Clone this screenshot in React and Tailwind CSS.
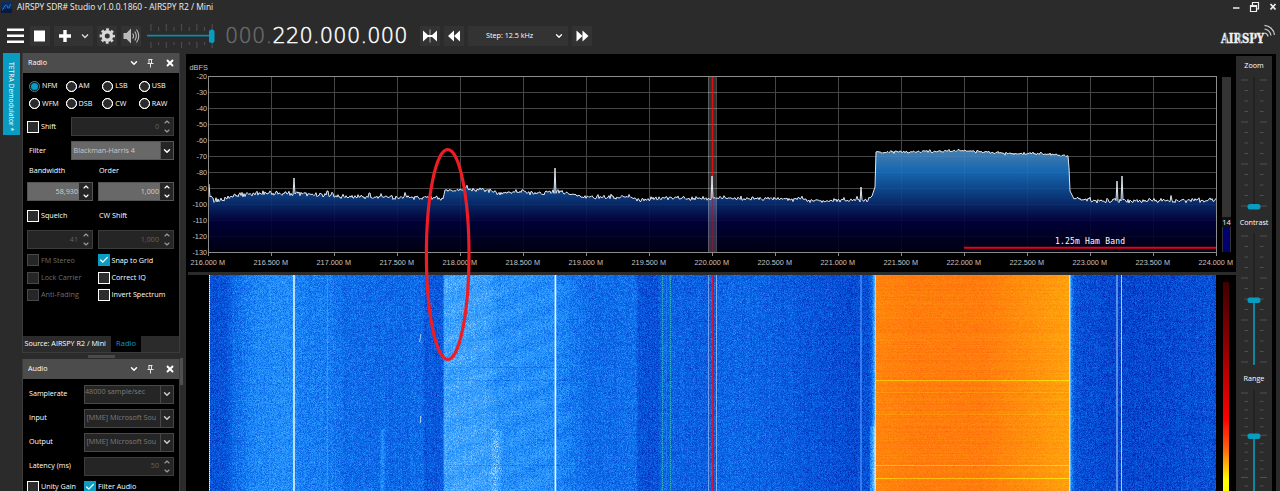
import React, { useLayoutEffect, useRef } from 'react';
import { ChevronDown, ChevronUp, Check, X } from 'lucide-react';

const GRID_LEFT = 208.5;
const GRID_STEP = 63;
const DB_TOP = 76.5;
const DB_STEP = 16;

const dbLabels = [-20, -30, -40, -50, -60, -70, -80, -90, -100, -110, -120, -130];
const freqLabels = Array.from({ length: 17 }, (_, i) => `${(216 + i * 0.5).toFixed(3)} M`);

// noise floor of the spectrum, [x, y]
const floorPoints = [
  [209, 184], [210, 197], [214, 200], [225, 199], [234, 196], [255, 193], [275, 193], [300, 193.5],
  [325, 195.5], [350, 197], [400, 197], [443, 198], [445, 190.5], [465, 190], [484, 189.5], [500, 193],
  [520, 191.5], [540, 193], [560, 191.5], [580, 196], [600, 198], [630, 196.5], [640, 200], [660, 198],
  [700, 198.5], [740, 198], [790, 199], [820, 201], [850, 200], [868, 200], [872, 196], [875, 187],
  [875.6, 152], [920, 151.5], [960, 151], [985, 151.5], [1005, 153.5], [1040, 153.5], [1060, 155],
  [1068.5, 156], [1070, 191], [1074, 199], [1100, 201], [1140, 201], [1180, 200.5], [1216, 200],
];

const spikes = [
  [293.7, 178], [327.5, 191], [369.5, 193], [555.3, 168], [712.3, 176],
  [861.2, 187], [1117, 181], [1121.6, 176], [1170.6, 195.5],
];

// waterfall signal level by column
const levelPoints = [
  [209, 0.3], [225, 0.3], [235, 0.4], [255, 0.48], [292, 0.5], [300, 0.46], [330, 0.44], [345, 0.4],
  [400, 0.38], [421, 0.4], [425, 0.33], [443.4, 0.33], [443.6, 0.59], [485, 0.58], [500, 0.52], [550, 0.51],
  [570, 0.45], [590, 0.39], [636, 0.41], [639, 0.31], [658, 0.3], [662, 0.37], [700, 0.35], [735, 0.38],
  [755, 0.37], [800, 0.33], [850, 0.28], [868, 0.29], [872, 0.4], [875.4, 0.72], [1069, 0.72],
  [1072, 0.42], [1076, 0.3], [1120, 0.26], [1170, 0.27], [1216, 0.3],
];

const palette = [
  [0, 0, 0, 120], [0.12, 0, 30, 168], [0.28, 6, 76, 212], [0.4, 14, 108, 234], [0.5, 30, 142, 252],
  [0.62, 72, 168, 255], [0.8, 170, 220, 255], [1, 240, 250, 255],
];

function makeRandom(seed) {
  let s = seed;
  return () => {
    s = (s * 1664525 + 1013904223) >>> 0;
    return s / 4294967296;
  };
}

function interpolate(points, x) {
  if (x <= points[0][0]) return points[0].slice(1);
  for (let i = 1; i < points.length; i++) {
    if (x <= points[i][0]) {
      const a = points[i - 1];
      const b = points[i];
      const t = (x - a[0]) / (b[0] - a[0]);
      return a.slice(1).map((v, k) => v + (b[k + 1] - v) * t);
    }
  }
  return points[points.length - 1].slice(1);
}

function buildTrace() {
  const rand = makeRandom(42);
  const pts = [];
  for (let x = 209; x <= 1216; x += 1) {
    const spike = spikes.find((s) => Math.abs(s[0] - x) <= 0.5);
    const steep = (x > 869 && x < 877) || (x > 1066 && x < 1075) || x < 211;
    const plateau = x >= 877 && x <= 1066;
    let y = interpolate(floorPoints, x)[0];
    if (!steep) y += (rand() + rand() - 1) * (plateau ? 1.8 : 2.8);
    if (!steep && !plateau && rand() > 0.98) y -= 3;
    if (spike) y = spike[1];
    pts.push(`${x},${y.toFixed(1)}`);
  }
  return pts.join(' ');
}

const trace = buildTrace();

function Waterfall() {
  const ref = useRef(null);

  useLayoutEffect(() => {
    const ctx = ref.current.getContext('2d');
    const w = 1007;
    const h = 216;
    const img = ctx.createImageData(w, h);
    const rand = makeRandom(7);
    const colJitter = Array.from({ length: w }, () => (rand() - 0.5) * 0.03);
    const levels = Array.from({ length: w }, (_, i) => interpolate(levelPoints, i + 209.5)[0]);

    for (let y = 0; y < h; y++) {
      const gy = y + 275;
      const row = (rand() - 0.5) * 0.015;
      const rowOrange = (rand() - 0.5) * 12;
      const dim = gy === 367 || gy === 380 || gy === 465 ? 0.07 : 0;
      for (let x = 0; x < w; x++) {
        const gx = x + 209;
        const n = (rand() + rand() + rand()) / 1.5 - 1;
        let r, g, b;
        if (gx >= 876 && gx < 1069) {
          const t = (gx - 876) / 193;
          let base = 124 + 14 * Math.max(0, 0.2 - t) * 3;
          if (t > 0.55) base += (t - 0.55) * 80;
          r = 255;
          g = base + n * 20 + rowOrange;
          b = 13;
          if (gy === 380 || gy === 465 || gy === 478) g += 62;
          if (gy === 392 || gy === 414) g += 22;
        } else {
          let v = levels[x] + colJitter[x] + row + n * 0.165;
          if (gx > 443 && gx < 575) {
            v += Math.sin((gy * 2.2 + gx * 0.9) / 9) * 0.018 - dim;
          }
          if (gy > 428) {
            const d = Math.abs(gx - 497 + (gy - 428) * 0.04);
            if (d < 7) v += (1 - d / 7) * (0.13 + n * 0.1);
            const e = Math.abs(gx - 382);
            if (e < 4) v += (1 - e / 4) * 0.11;
          }
          if (gx > 869 && gx < 876 && gy > 425) v += 0.14;
          const c = interpolate(palette, Math.max(0, v));
          r = c[0];
          g = c[1];
          b = c[2];
        }
        const i = (y * w + x) * 4;
        img.data[i] = r;
        img.data[i + 1] = g;
        img.data[i + 2] = b;
        img.data[i + 3] = 255;
      }
    }
    ctx.putImageData(img, 0, 0);

    const line = (x, width, color) => {
      ctx.fillStyle = color;
      ctx.fillRect(x - 209, 0, width, h);
    };
    const dots = (x, color) => {
      ctx.fillStyle = color;
      for (let y = 0; y < h; y += 2) ctx.fillRect(x - 209, y, 1, 1);
    };

    line(209, 1, 'rgba(150,215,240,0.7)');
    dots(209, '#ffffff');
    line(293, 2, 'rgba(215,238,255,0.85)');
    line(327, 1, 'rgba(110,190,255,0.3)');
    line(555, 1, '#fffb90');
    line(554, 1, 'rgba(170,215,255,0.6)');
    line(556, 1, 'rgba(170,215,255,0.3)');
    line(666, 1, 'rgba(50,150,255,0.4)');
    line(662, 1, 'rgba(20,140,150,0.8)');
    line(670, 1, 'rgba(20,140,150,0.8)');
    dots(662, '#28c860');
    dots(670, '#28c860');
    line(708, 1, 'rgba(180,200,240,0.6)');
    line(716, 1, 'rgba(200,215,245,0.65)');
    line(712, 1, '#d01838');
    line(713, 1, 'rgba(110,30,100,0.5)');
    line(860, 2, 'rgba(90,165,255,0.55)');
    line(875, 1, 'rgba(160,235,255,0.6)');
    line(1069, 1, 'rgba(190,240,230,0.9)');
    line(1070, 1, 'rgba(120,200,255,0.6)');
    line(1116, 2, 'rgba(130,180,245,0.65)');
    line(1121, 1, 'rgba(205,225,255,0.85)');
    ctx.strokeStyle = 'rgba(190,225,255,0.8)';
    ctx.beginPath();
    ctx.moveTo(212, 59);
    ctx.lineTo(210.5, 67);
    ctx.moveTo(211.5, 141);
    ctx.lineTo(211.5, 148);
    ctx.stroke();
  }, []);

  return <canvas ref={ref} width={1007} height={216} className="block h-[216px] w-[1007px]" />;
}

function Spectrum() {
  return (
    <svg width="1050" height="218" viewBox="186 54 1050 218" className="block" fontFamily="Liberation Sans, Arial, sans-serif">
      <defs>
        <linearGradient id="spec" gradientUnits="userSpaceOnUse" x1="0" y1="76" x2="0" y2="252">
          <stop offset="0" stopColor="#87ceeb" />
          <stop offset="0.43" stopColor="#4a8ac0" />
          <stop offset="0.54" stopColor="#1972c4" />
          <stop offset="0.68" stopColor="#0c4088" />
          <stop offset="0.83" stopColor="#01003c" />
          <stop offset="1" stopColor="#000014" />
        </linearGradient>
      </defs>
      <g stroke="#454545" shapeRendering="crispEdges">
        {dbLabels.map((d, i) => (
          <path key={d} d={`M208 ${DB_TOP + i * DB_STEP}H1216`} />
        ))}
        {freqLabels.map((f, i) => (
          <path key={f} d={`M${GRID_LEFT + i * GRID_STEP} 76V252`} />
        ))}
      </g>
      <polygon points={`209,252 ${trace} 1216,252`} fill="url(#spec)" fillOpacity="0.9" />
      <rect x="708" y="77" width="8.5" height="175" fill="#fff" fillOpacity="0.2" />
      <path d="M708.5 77V252M716.5 77V252" stroke="#fff" strokeOpacity="0.2" />
      <path d="M712.5 77V176" stroke="#e01010" strokeWidth="1.3" />
      <path d="M712.5 176V252" stroke="#c00020" strokeOpacity="0.45" />
      <polyline points={trace} fill="none" stroke="#dfe6ee" strokeWidth="1" />
      <g stroke="#8c8c8c" fill="none" shapeRendering="crispEdges">
        <path d="M208.5 76.5H1216.5V252.5H208.5Z" />
        {freqLabels.map((f, i) => (
          <path key={f} d={`M${GRID_LEFT + i * GRID_STEP} 252V256`} />
        ))}
      </g>
      <path d="M964 247.7H1216" stroke="#e8001c" strokeWidth="2" />
      <text x="1055" y="244" fontSize="8" textLength="70" fill="#fff" fontFamily="DejaVu Sans Mono, monospace">1.25m Ham Band</text>
      <g fill="#c4c4c4" fontSize="7.3">
        <text x="189.5" y="70">dBFS</text>
        {dbLabels.map((d, i) => (
          <text key={d} x="207" y={79.2 + i * DB_STEP} textAnchor="end">{d}</text>
        ))}
        {freqLabels.map((f, i) => (
          <text key={f} x={207.8 + i * GRID_STEP} y="265" textAnchor="middle">{f}</text>
        ))}
      </g>
      <rect x="1222" y="77" width="9" height="175" fill="#333" />
      <rect x="1222" y="217" width="9" height="10" fill="#111" />
      <rect x="1223" y="227" width="7" height="25" fill="#00006e" />
      <text x="1226.5" y="225" textAnchor="middle" fontSize="7.5" fill="#eee" fontFamily="Open Sans, sans-serif">14</text>
    </svg>
  );
}

function PanelHeader({ title }) {
  return (
    <div className="flex h-5 shrink-0 items-center bg-[#4c4c4c] pl-[5px] pr-[4px]">
      <span className="flex-1">{title}</span>
      <ChevronDown className="mr-[8px] size-[10px]" strokeWidth={3.5} />
      <svg className="mr-[11px]" width="7" height="9" viewBox="0 0 7 9" fill="none" stroke="#e8e8e8">
        <path d="M1.5 0.5H5.5M2 0.5V4.5M4.5 0.5V4.5M0.5 4.5H6.5M3.5 4.5V8.5" />
      </svg>
      <X className="size-[10px]" strokeWidth={4.5} />
    </div>
  );
}

function RadioButton({ label, selected }) {
  return (
    <div className="flex w-[36.6px] items-center gap-[2px]">
      <span
        className={
          selected
            ? 'flex size-[11px] shrink-0 items-center justify-center rounded-full border-[1.5px] border-[#0a9cc4] bg-[#111]'
            : 'size-[11px] shrink-0 rounded-full outline-[0.5px] -outline-offset-1 outline-white border border-white bg-[#2b2b2b]'
        }
      >
        {selected && <span className="size-[7px] rounded-full bg-[#0a9cc4]" />}
      </span>
      {label}
    </div>
  );
}

function CheckBox({ label, checked, disabled }) {
  let box = 'border-[1.5px] border-white bg-[#2d2d2d]';
  if (checked) box = 'bg-[#0a9cc4]';
  if (disabled) box = 'border border-[#484848] bg-[#262626]';
  return (
    <div className={`flex items-center gap-[2px] ${disabled ? 'text-[#6e6e6e]' : ''}`}>
      <span className={`flex size-[12px] items-center justify-center ${box}`}>
        {checked && <Check className="size-[10px]" strokeWidth={3} />}
      </span>
      {label}
    </div>
  );
}

function NumberBox({ value, enabled, className }) {
  return (
    <div
      className={`flex h-[19px] border ${enabled ? 'border-[#555] bg-[#686868] text-[#d0d0d0]' : 'border-[#3c3c3c] bg-[#252525] text-[#626262]'} ${className}`}
    >
      <span className="flex flex-1 items-center justify-end pr-px">{value}</span>
      <span className={`flex w-[13px] flex-col items-center justify-between bg-[#252525] ${enabled ? 'text-white' : 'text-[#999]'}`}>
        <ChevronUp className="size-[8px]" strokeWidth={3.5} />
        <ChevronDown className="size-[8px]" strokeWidth={3.5} />
      </span>
    </div>
  );
}

function SelectBox({ value, enabled, className }) {
  return (
    <div className={`flex h-[19px] border ${enabled ? 'border-[#555] bg-[#686868] text-[#c8c8c8]' : 'border-[#484848] bg-[#252525] text-[#7a7a7a]'} ${className}`}>
      <span className="flex flex-1 items-center overflow-hidden whitespace-nowrap pl-[1.5px]">{value}</span>
      <span className={`flex w-[13px] items-center justify-center border-l bg-[#252525] ${enabled ? 'border-[#555] text-white' : 'border-[#484848] text-[#ccc]'}`}>
        <ChevronDown className="size-[10px]" strokeWidth={3.5} />
      </span>
    </div>
  );
}

function RadioPanel() {
  return (
    <section className="flex h-[300px] shrink-0 flex-col border-x border-b border-[#3c3c3c] bg-black">
      <PanelHeader title="Radio" />
      <div className="flex flex-1 flex-col pl-[4px] pt-[4px]">
        <div className="ml-[2px] flex h-[18px]">
          <RadioButton label="NFM" selected />
          <RadioButton label="AM" />
          <RadioButton label="LSB" />
          <RadioButton label="USB" />
        </div>
        <div className="ml-[2px] flex h-[17px]">
          <RadioButton label="WFM" />
          <RadioButton label="DSB" />
          <RadioButton label="CW" />
          <RadioButton label="RAW" />
        </div>
        <div className="mt-[5px] flex h-[19px] items-center">
          <div className="w-[44px]"><CheckBox label="Shift" /></div>
          <NumberBox value="0" className="w-[103px]" />
        </div>
        <div className="mt-[5px] flex h-[19px] items-center">
          <div className="w-[44px] pl-[2px]">Filter</div>
          <SelectBox value="Blackman-Harris 4" enabled className="w-[103px]" />
        </div>
        <div className="flex h-[22px] items-center">
          <div className="w-[71px] pl-[2px]">Bandwidth</div>
          <div className="pl-px">Order</div>
        </div>
        <div className="flex gap-[5px]">
          <NumberBox value="58,930" enabled className="w-[66px]" />
          <NumberBox value="1,000" enabled className="w-[76px]" />
        </div>
        <div className="flex h-[29px] items-center">
          <div className="w-[71px]"><CheckBox label="Squelch" /></div>
          <div className="pl-px">CW Shift</div>
        </div>
        <div className="flex gap-[5px]">
          <NumberBox value="41" className="w-[66px]" />
          <NumberBox value="1,000" className="w-[76px]" />
        </div>
        <div className="mt-[2.5px] grid auto-rows-[17.4px] grid-cols-[70.5px_1fr]">
          <CheckBox label="FM Stereo" disabled />
          <CheckBox label="Snap to Grid" checked />
          <CheckBox label="Lock Carrier" disabled />
          <CheckBox label="Correct IQ" />
          <CheckBox label="Anti-Fading" disabled />
          <CheckBox label="Invert Spectrum" />
        </div>
      </div>
      <div className="flex h-[16px] items-center bg-[#2b2b2b]">
        <span className="flex h-full w-[88px] items-center pl-[1.5px]">Source: AIRSPY R2 / Mini</span>
        <span className="flex h-full w-[30px] items-center justify-center bg-black text-[7.6px] text-[#0a9cc4]">Radio</span>
      </div>
    </section>
  );
}

function AudioRow({ label, children }) {
  return (
    <div className="flex h-6 items-center">
      <span className="w-[57px] pl-[2px]">{label}</span>
      {children}
    </div>
  );
}

function AudioPanel() {
  return (
    <section className="flex h-[132px] shrink-0 flex-col overflow-hidden border-x border-[#3c3c3c] bg-black">
      <PanelHeader title="Audio" />
      <div className="pl-[4px] pt-[3px]">
        <AudioRow label="Samplerate">
          <SelectBox value={<span className="-ml-[1.5px] -mt-[4px]">48000 sample/sec</span>} className="w-[90px]" />
        </AudioRow>
        <AudioRow label="Input"><SelectBox value="[MME] Microsoft Sou" className="w-[90px]" /></AudioRow>
        <AudioRow label="Output"><SelectBox value="[MME] Microsoft Sou" className="w-[90px]" /></AudioRow>
        <AudioRow label="Latency (ms)"><NumberBox value="50" className="w-[90px]" /></AudioRow>
        <div className="flex h-[18px] items-center">
          <div className="w-[57px]"><CheckBox label="Unity Gain" /></div>
          <CheckBox label="Filter Audio" checked />
        </div>
      </div>
    </section>
  );
}

function VerticalSlider({ height, count, step, every, thumb, fill }) {
  const ticks = Array.from({ length: count }, (_, i) => i);
  return (
    <svg width="36" height={height} className="block shrink-0">
      <rect x="17" y="2" width="2" height={height - 4} fill="#222" />
      {ticks.map((i) => {
        const y = 5 + i * step;
        const len = i % every === 0 ? 7 : 3.5;
        return <path key={i} d={`M${12 - len} ${y}H12M24 ${y}h${len}`} stroke="#505050" />;
      })}
      {fill && <rect x="17" y={thumb} width="2" height={height - thumb - 3} fill="#0c87a0" />}
      <rect x="11.5" y={thumb - 2.5} width="13" height="5.5" rx="2.5" fill="#0a9cc0" />
    </svg>
  );
}

function SideSliders() {
  return (
    <aside className="mt-[2px] flex w-9 flex-col overflow-hidden bg-[#2b2b2b] text-center">
      <div className="h-[19px] shrink-0 leading-[18px]">Zoom</div>
      <VerticalSlider height={137} count={13} step={10.5} every={4} thumb={131.5} />
      <div className="h-[19px] shrink-0 leading-[20px]">Contrast</div>
      <VerticalSlider height={137} count={13} step={10.5} every={4} thumb={69} fill />
      <div className="h-[20px] shrink-0 leading-[21px]">Range</div>
      <VerticalSlider height={110} count={13} step={8.45} every={5} thumb={48} fill />
    </aside>
  );
}

function TitleBar() {
  return (
    <header className="flex h-[14px] shrink-0 items-center">
      <svg width="11" height="11" viewBox="0 0 11 11" className="ml-px">
        <rect width="11" height="11" fill="#0a2c66" />
        <rect y="7" width="11" height="4" fill="#071a3c" />
        <path d="M1 8C3 8 3 3 5 3S6 7 7.5 6 9 2 10 2" stroke="#2680d0" fill="none" />
      </svg>
      <span className="ml-[5px] flex-1 text-[8.45px] leading-none text-[#f0f0f0]">AIRSPY SDR# Studio v1.0.0.1860 - AIRSPY R2 / Mini</span>
      <svg width="48" height="12" viewBox="1232 0 48 12" fill="none" stroke="#eee">
        <path d="M1233 7H1239.5" strokeWidth="1.5" />
        <path d="M1252.5 4V1.500H1258.500V8H1256.500M1250.500 4.500H1256.500V10.500H1250.500ZM1250.500 5.500H1256.500" strokeWidth="1.2" />
        <path d="M1270.5 3L1275.5 8.5M1275.5 3L1270.5 8.5" strokeWidth="1.7" />
      </svg>
    </header>
  );
}

function Toolbar() {
  return (
    <div className="flex h-[39px] shrink-0 items-center pt-[5px]">
      <svg width="142" height="20" viewBox="0 0 142 20">
        <path d="M30 0h20v20H30zM54 0h39v20H54zM97 0h20v20H97zM121 0h20v20h-20z" fill="#333" />
        <path d="M7 3.7h17M7 9.7h17M7 15.7h17" stroke="#fff" strokeWidth="2.6" />
        <path d="M34 4.5h11v11H34z" fill="#fff" />
        <path d="M65 4v12M59 10h12" stroke="#fff" strokeWidth="3.4" />
        <path d="M82 8.5l3 3 3-3" stroke="#ddd" strokeWidth="1.3" fill="none" />
        <circle cx="107.3" cy="10" r="4.2" fill="none" stroke="#d8d8d8" strokeWidth="3.4" />
        <circle cx="107.3" cy="10" r="6.6" fill="none" stroke="#d8d8d8" strokeWidth="2.2" strokeDasharray="2.8 2.384" strokeDashoffset="1.4" />
        <path d="M123.5 7h3l4.5-4.5v15L126.5 13h-3z" fill="#bbb" />
        <path d="M132.7 7.5q1.8 2.5 0 5M134.8 5.5q3 4.5 0 9M136.5 3.5q4.5 6.5 0 13" stroke="#bbb" fill="none" strokeWidth="1.1" />
      </svg>
      <svg width="74" height="26" viewBox="142 0 74 26">
        {Array.from({ length: 9 }, (_, i) => (
          <path
            key={i}
            d={i % 2 ? `M${151 + i * 7.65} 4v4M${151 + i * 7.65} 19v3` : `M${151 + i * 7.65} 1v7M${151 + i * 7.65} 19v6`}
            stroke="#505050"
          />
        ))}
        <path d="M147 12.7H212" stroke="#0c8ba8" strokeWidth="1.7" />
        <rect x="209" y="6.5" width="5.5" height="13.5" rx="2.5" fill="#0a9cc0" />
      </svg>
      <div className="ml-[9px] w-[186px] whitespace-nowrap font-['DejaVu_Sans'] text-[20.8px] font-extralight leading-none tracking-[0.28px] text-white [-webkit-text-stroke:0.5px]">
        <span className="text-[#6a6a6a]">000.</span>220.000.000
      </div>
      <svg width="20" height="20" className="ml-[9px] bg-[#333]">
        <path d="M3 4.500L9 10 3 15.500zM17 4.500L11 10l6 5.500z" fill="#fff" />
        <path d="M10 3.5v13" stroke="#aaa" strokeWidth="1" />
        <path d="M3 9h14v2H3z" fill="#fff" />
      </svg>
      <svg width="20" height="20" className="ml-1 bg-[#333]">
        <path d="M10 4.500L4 10l6 5.500zM16 4.500L10 10l6 5.500z" fill="#fff" />
      </svg>
      <div className="ml-1 flex h-5 w-[100px] items-center bg-[#333]">
        <span className="ml-[18px] flex-1">Step: 12.5 kHz</span>
        <ChevronDown className="mr-[4px] size-[10px]" strokeWidth={3} />
      </div>
      <svg width="20" height="20" className="ml-1 bg-[#333]">
        <path d="M4.500 4.500l6 5.500-6 5.500zM10.500 4.500l6 5.500-6 5.500z" fill="#fff" />
      </svg>
      <svg width="58" height="24" viewBox="1218 22.500 58 24" className="ml-auto mr-[4px]">
        <text x="1221" y="41.5" fontFamily="DejaVu Serif, serif" fontWeight="700" fontSize="13" textLength="43" lengthAdjust="spacingAndGlyphs" fill="#f0f0f0" stroke="#f0f0f0" strokeWidth="0.5">AIRSPY</text>
        <path d="M1226.2 31v11M1240.2 31v11M1254 31v11" stroke="#2b2b2b" strokeWidth="0.7" />
        <path d="M1264.5 31.5a4 4 0 0 1 3.5 3.5M1264.5 27.5a8 8 0 0 1 6.5 6.5M1264.5 23.8a11 11 0 0 1 10 9.5" stroke="#ccc" fill="none" strokeWidth="1.2" />
      </svg>
    </div>
  );
}

export default function App() {
  return (
    <div className="flex h-[491px] w-[1280px] flex-col overflow-hidden bg-[#2b2b2b] font-['Open_Sans'] text-[7.2px] leading-none text-white">
      <TitleBar />
      <Toolbar />
      <main className="flex min-h-0 flex-1">
        <div className="w-[22px] pl-[3px]">
          <div className="flex h-[82px] w-[17px] items-start justify-center bg-[#0a9cc0] pt-[5px] text-[6.8px] [writing-mode:vertical-rl]">
            <span className="w-[17px] text-center leading-[17px]">TETRA Demodulator *</span>
          </div>
        </div>
        <div className="flex w-[158px] flex-col">
          <RadioPanel />
          <div className="flex h-[6px] shrink-0 items-center justify-center">
            <span className="h-[3px] w-[27px] bg-[#4a4a4a]" />
          </div>
          <AudioPanel />
        </div>
        <div className="w-[6px] pt-[305px]">
          <div className="h-[27px] w-[3px] bg-[#505050]" />
        </div>
        <div className="relative mt-px w-[1050px] bg-black">
          <Spectrum />
          <div className="ml-[2px] h-[3px] bg-[#2b2b2b]" />
          <div className="flex pl-[23px]">
            <Waterfall />
            <div className="ml-[7px] mt-[7px] h-[210px] w-[6px] bg-[linear-gradient(#400000_0px,#8a0000_60px,#ff0000_137px,#ff5a10_165px,#ffff00_198px)]" />
          </div>
          <svg width="48" height="216" className="absolute left-[238px] top-[93px]">
            <ellipse cx="23.7" cy="107.5" rx="21.3" ry="105" fill="none" stroke="#ee1c24" strokeWidth="3.2" />
          </svg>
        </div>
        <div className="mt-px flex bg-black pr-[4px]">
          <SideSliders />
        </div>
      </main>
    </div>
  );
}
